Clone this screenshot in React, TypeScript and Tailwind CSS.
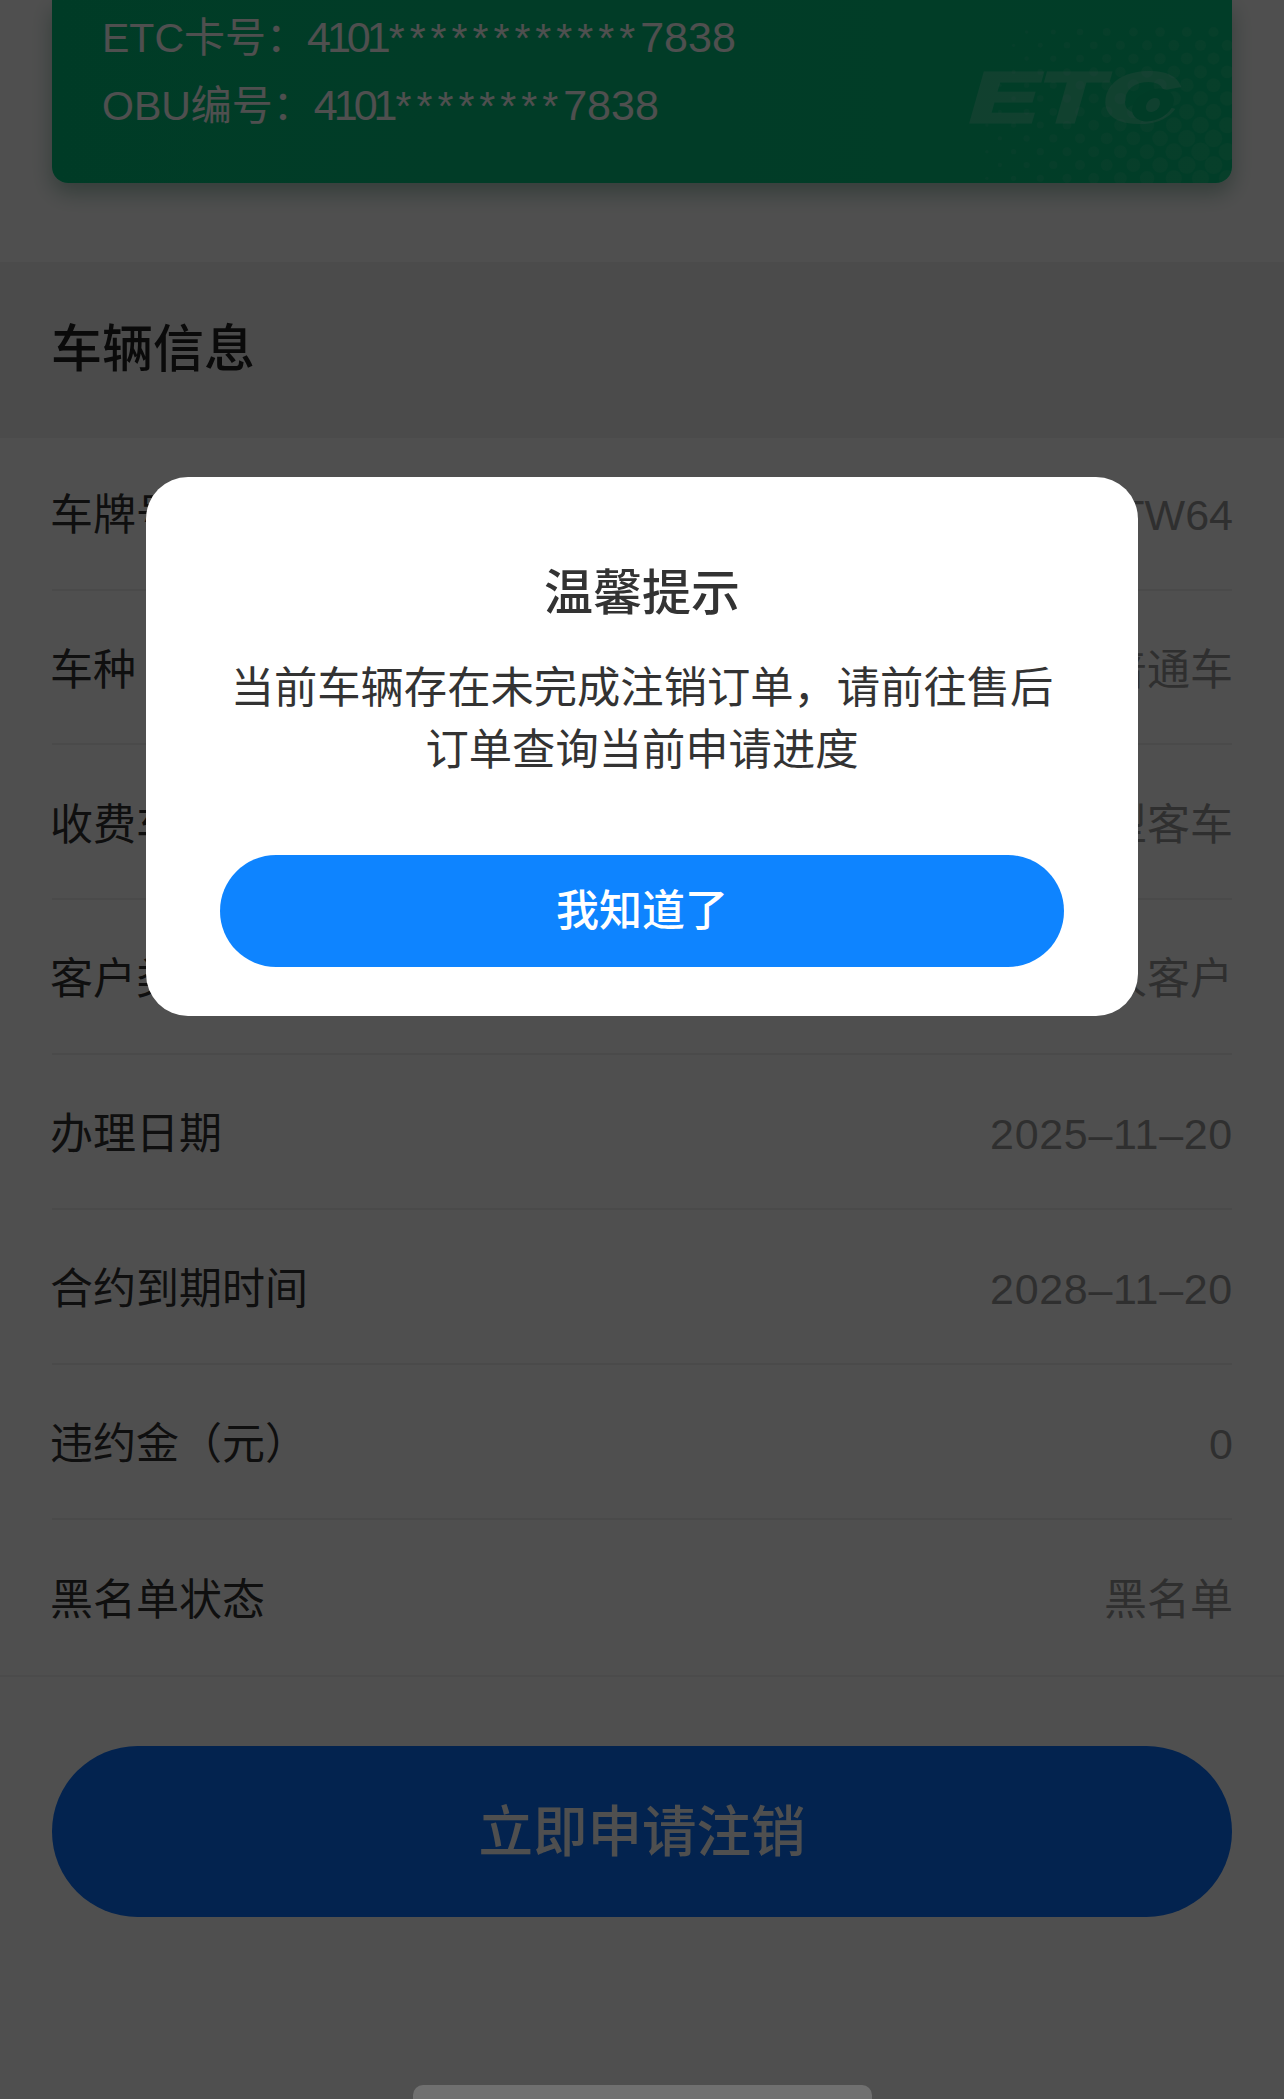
import React from 'react'

const rows = [
  ['车牌号', '豫A****TW64'],
  ['车种', '普通车'],
  ['收费车型', '一型客车'],
  ['客户类型', '个人客户'],
  ['办理日期', '2025–11–20'],
  ['合约到期时间', '2028–11–20'],
  ['违约金（元）', '0'],
  ['黑名单状态', '黑名单'],
]

// halftone dots in the card corner, bigger towards the bottom right
const dots: number[][] = []
for (let k = 0; k < 12; k++) {
  const y = 32 + k * 13.3
  for (let x = k % 2 ? 800 : 813; x < 1240; x += 26.7) {
    const dist = Math.hypot(x - 1205, y - 155)
    const r = 9.5 - dist / 28
    if (r > 1.5) dots.push([x, y, r])
  }
}

const CardNumber = ({ label, stars }: { label: string; stars: string }) => (
  <p className="h-[68px]">
    {label}：<span className="text-[43px] tracking-[-4px]">4101</span>
    <span className="ml-[2px] tracking-[5px]">{stars}</span>
    <span className="text-[43px]">7838</span>
  </p>
)

export default function App() {
  return (
    <div className="relative h-[2099px] w-full overflow-hidden bg-white font-['Liberation_Sans','Noto_Sans_CJK_SC',sans-serif]">
      <div className="relative mx-[52px] h-[183px] overflow-hidden rounded-b-[16px] bg-gradient-to-r from-[#03bf7c] to-[#06c680] pl-[50px] pt-[3px] text-[41px] leading-[68px] text-white shadow-[0_10px_22px_rgba(0,90,55,0.35)]">
        <CardNumber label="ETC卡号" stars="************" />
        <CardNumber label="OBU编号" stars="********" />
        <svg className="absolute left-0 top-0" width="1180" height="183" viewBox="52 0 1180 183">
          {dots.map(([x, y, r], i) => (
            <circle key={i} cx={x} cy={y} r={r} fill="#fff" opacity="0.07" />
          ))}
        </svg>
        <span className="absolute left-[918px] top-[62px] origin-left scale-x-[1.46] text-[71px] font-bold italic leading-[71px] text-white opacity-20 [-webkit-text-stroke:3px_white]">
          ETC
        </span>
        <svg className="absolute left-0 top-0" width="1180" height="183" viewBox="52 0 1180 183">
          <ellipse cx="1153" cy="105" rx="22" ry="15" transform="rotate(-25 1153 105)" fill="#04c27e" />
          <ellipse cx="1153" cy="105" rx="8" ry="6" transform="rotate(-45 1153 105)" fill="#fff" opacity="0.2" />
        </svg>
      </div>

      <div className="mt-[79px] flex h-[176px] items-center bg-[#f0f0f0] px-[51px] text-[51px] font-medium text-[#222]">
        车辆信息
      </div>

      <div className="border-b-2 border-[#f2f2f2] px-[52px]">
        {rows.map(([label, value], i) => (
          <div
            key={label}
            className={`flex items-center justify-between text-[43px] ${i === 0 ? 'h-[152.5px] pt-[3px]' : 'h-[154.9px] pt-[6px]'} ${i < 7 ? 'border-b-2 border-[#eee]' : ''}`}
          >
            <span className="-ml-[2px] text-[#333]">{label}</span>
            <span className={`-mr-[1px] text-[#999] ${value.includes('–') ? 'tracking-[0.7px]' : ''}`}>{value}</span>
          </div>
        ))}
      </div>

      <div className="mx-[52px] mt-[69px] flex h-[171px] items-center justify-center rounded-full bg-[#0a71ff] pt-[4px] text-[54.5px] font-medium text-white">
        立即申请注销
      </div>

      <div className="absolute inset-0 bg-black/[0.69]" />

      <div className="absolute left-[146px] top-[477px] flex h-[539px] w-[992px] flex-col items-center rounded-[42px] bg-white">
        <h2 className="mt-[84px] text-[49px] font-medium leading-[64px] text-[#333]">温馨提示</h2>
        <p className="mt-[32px] w-[860px] text-center text-[43.3px] leading-[62px] text-[#333]">
          当前车辆存在未完成注销订单，请前往售后订单查询当前申请进度
        </p>
        <button className="mt-[74px] h-[112px] w-[844px] rounded-[56px] bg-[#0e84ff] text-[43px] font-medium text-white">
          我知道了
        </button>
      </div>

      <div className="absolute bottom-0 left-[413px] h-[14px] w-[459px] rounded-t-[10px] bg-[#707070]" />
    </div>
  )
}
